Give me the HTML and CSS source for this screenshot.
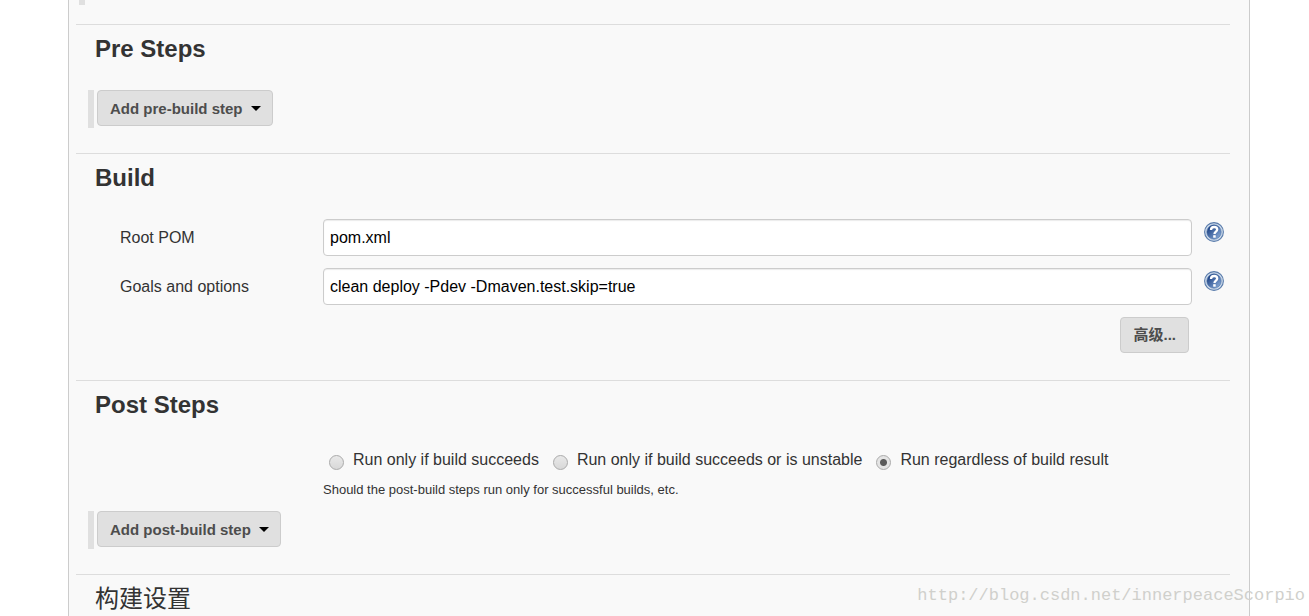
FILE: index.html
```html
<!DOCTYPE html>
<html lang="en">
<head>
<meta charset="utf-8">
<title>Job configuration</title>
<link rel="stylesheet" href="styles.css">
</head>
<body>
<svg class="defs" width="0" height="0" aria-hidden="true">
  <defs>
    <linearGradient id="ball" x1="0" y1="0" x2="1" y2="1">
      <stop offset="0.2" stop-color="#24498a"/>
      <stop offset="1" stop-color="#94b5e0"/>
    </linearGradient>
    <symbol id="help" viewBox="0 0 20 20">
      <circle cx="10" cy="10" r="9.4" fill="#cddaea" stroke="#5a7cab" stroke-width="1.1"/>
      <circle cx="10" cy="10" r="7.2" fill="url(#ball)" stroke="#4a70a6" stroke-width="0.6"/>
      <path d="M7 8C7 5.9 8.2 5 10.1 5s3.1 1 3.1 2.6c0 2-2.7 2-2.7 4.4" fill="none" stroke="#fff" stroke-width="2.3"/>
      <rect x="9.2" y="13.2" width="2.5" height="2.5" fill="#fff"/>
    </symbol>
  </defs>
</svg>
<main class="panel">
  <div class="previous"></div>
  <section class="section">
    <h2 class="title">Pre Steps</h2>
    <div class="step-bar">
      <button class="button menu" type="button">Add pre-build step <span class="caret"></span></button>
    </div>
  </section>
  <section class="section">
    <h2 class="title">Build</h2>
    <div class="fields">
      <label for="pom">Root POM</label>
      <input class="text" id="pom" type="text" value="pom.xml">
      <a class="help" href="#pom" aria-label="Help for Root POM"><svg width="20" height="20"><use href="#help"/></svg></a>
      <label for="goals">Goals and options</label>
      <input class="text" id="goals" type="text" value="clean deploy -Pdev -Dmaven.test.skip=true">
      <a class="help" href="#goals" aria-label="Help for Goals and options"><svg width="20" height="20"><use href="#help"/></svg></a>
      <button class="button advanced" type="button" lang="zh">高级...</button>
    </div>
  </section>
  <section class="section">
    <h2 class="title">Post Steps</h2>
    <div class="choices">
      <label class="choice"><input class="radio" type="radio" name="run">Run only if build succeeds</label>
      <label class="choice"><input class="radio" type="radio" name="run">Run only if build succeeds or is unstable</label>
      <label class="choice"><input class="radio" type="radio" name="run" checked>Run regardless of build result</label>
    </div>
    <p class="hint">Should the post-build steps run only for successful builds, etc.</p>
    <div class="step-bar">
      <button class="button menu" type="button">Add post-build step <span class="caret"></span></button>
    </div>
  </section>
  <section class="section last">
    <h2 class="title chinese" lang="zh">构建设置</h2>
  </section>
</main>
<div class="watermark">http://blog.csdn.net/innerpeaceScorpio</div>
</body>
</html>
```
FILE: styles.css
```css
* { box-sizing: border-box; }

body {
  margin: 0;
  background: #fff;
  color: #333;
  font: 16px/20px "Liberation Sans", Arial, "Noto Sans CJK SC", sans-serif;
}

.defs { position: absolute; }

.panel {
  min-height: 100vh;
  margin: 0 59px 0 68px;
  padding: 0 19px 0 7px;
  background: #f9f9f9;
  border: solid #ccc;
  border-width: 0 1px;
}

.previous {
  width: 6px;
  height: 5px;
  margin: 0 0 19px 3px;
  background: #e0e0e0;
}

.section {
  padding: 10px 6px 25px 12px;
  border-top: 1px solid #ddd;
}
.section.last { padding-bottom: 0; }

.title {
  margin: 0 0 27px 7px;
  font-size: 24px;
  line-height: 28px;
  font-weight: bold;
}
.title.chinese { margin-bottom: 0; font-weight: normal; }

.step-bar {
  height: 38px;
  padding-left: 3px;
  border-left: 6px solid #e0e0e0;
}

.button {
  display: inline-flex;
  align-items: center;
  height: 36px;
  padding: 0 12px;
  border: 1px solid #ccc;
  border-radius: 4px;
  background: #e0e0e0;
  color: #4d4d4d;
  font: bold 15px/20px "Liberation Sans", Arial, "Noto Sans CJK SC", sans-serif;
}
.button.menu { padding: 2px 11px 0 12px; }

.caret {
  margin: 0 0 2px 8px;
  border: solid transparent;
  border-width: 5px 5px 0;
  border-top-color: #000;
}

.fields {
  display: grid;
  grid-template-columns: 191px 1fr 20px;
  gap: 12px;
  align-items: center;
  padding-left: 32px;
  padding-bottom: 2px;
}

.text {
  width: 100%;
  height: 37px;
  padding: 0 6px;
  border: 1px solid #ccc;
  border-radius: 4px;
  background: #fff;
  box-shadow: inset 0 1px 1px rgba(0, 0, 0, 0.08);
  color: #000;
  font: inherit;
}

.help { align-self: start; padding-top: 3px; }
.help svg { display: block; }

.advanced {
  grid-column: 2;
  justify-self: end;
  margin-right: 3px;
}

.choices {
  display: flex;
  flex-wrap: wrap;
  gap: 14px;
  padding-left: 241px;
  padding-top: 4px;
}
.choice { display: flex; gap: 9px; }

.radio {
  appearance: none;
  width: 15px;
  height: 15px;
  margin: 5px 0 0;
  border: 1px solid #aaa;
  border-radius: 50%;
  background: linear-gradient(#e9e9e9, #d8d8d8);
}
.radio:checked {
  background: radial-gradient(circle, #5a5a5a 3px, #e4e4e4 4px);
}

.hint {
  margin: 10px 0 11px;
  padding-left: 235px;
  font-size: 13px;
  line-height: 20px;
}

.watermark {
  position: absolute;
  right: 4px;
  bottom: 10px;
  color: #d0d0cc;
  font: 17px/20px "Liberation Mono", monospace;
}
```
